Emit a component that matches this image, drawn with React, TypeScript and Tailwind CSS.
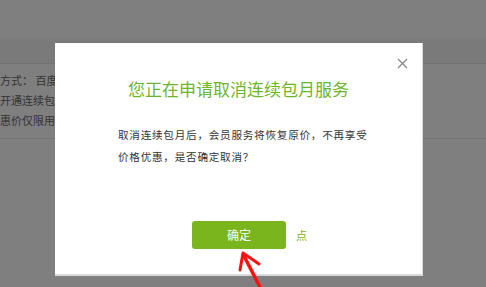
import React from 'react';

const font = { fontFamily: '"Noto Sans CJK SC", "Noto Sans", sans-serif' };

const BackgroundPage = () => (
  <div className="flex flex-col h-full">
    <div className="h-[38px] bg-[#7f7f7f]" />
    <div className="h-[26px] bg-[#7a7a7a] border-b border-[#727272]" />
    <div className="flex flex-col pt-[6px] text-[11px] text-[#333333] leading-[20px]">
      <p className="h-[20px]">方式：&nbsp;百度钱包</p>
      <p className="h-[20px]">开通连续包月服务</p>
      <p className="h-[20px]">惠价仅限用于首月</p>
    </div>
    <div className="mt-[8px] border-t border-[#747474]" />
  </div>
);

const Arrow = () => (
  <svg className="absolute left-[230px] top-[248px]" width="40" height="41" viewBox="0 0 40 41">
    <path d="M13 6 L31 41" stroke="#ff1010" strokeWidth="3.5" fill="none" />
    <path d="M13 5 L10 22 M13 5 L29 16" stroke="#ff1010" strokeWidth="3" fill="none" strokeLinecap="round" />
  </svg>
);

export default function App() {
  return (
    <div className="relative w-[486px] h-[287px] overflow-hidden bg-[#7f7f7f]" style={font}>
      <BackgroundPage />

      <div className="absolute left-[55px] top-[43px] w-[368px] h-[233px] bg-white border-b-[2px] border-r border-[#d9d9d9] flex flex-col items-center">
        <button className="absolute right-[14px] top-[15px]">
          <svg width="11" height="11" viewBox="0 0 11 11">
            <path d="M1 1 L10 10 M10 1 L1 10" stroke="#8c8c8c" strokeWidth="1.4" />
          </svg>
        </button>

        <h1 className="mt-[34px] text-[17px] leading-[24px] text-[#6fb52c]">
          您正在申请取消连续包月服务
        </h1>

        <p className="self-start mt-[23px] ml-[63px] text-[10.6px] leading-[22px] tracking-[0.75px] text-[#333333] whitespace-nowrap">
          取消连续包月后，会员服务将恢复原价，不再享受<br />
          价格优惠，是否确定取消？
        </p>

        <div className="self-start mt-[53px] ml-[137px] flex items-center gap-[10px]">
          <button className="w-[94px] h-[28px] rounded-[3px] bg-[#7ab51d] text-white text-[12px]">
            确定
          </button>
          <span className="text-[11px] text-[#7ab51d]">点</span>
        </div>
      </div>

      <Arrow />
    </div>
  );
}
